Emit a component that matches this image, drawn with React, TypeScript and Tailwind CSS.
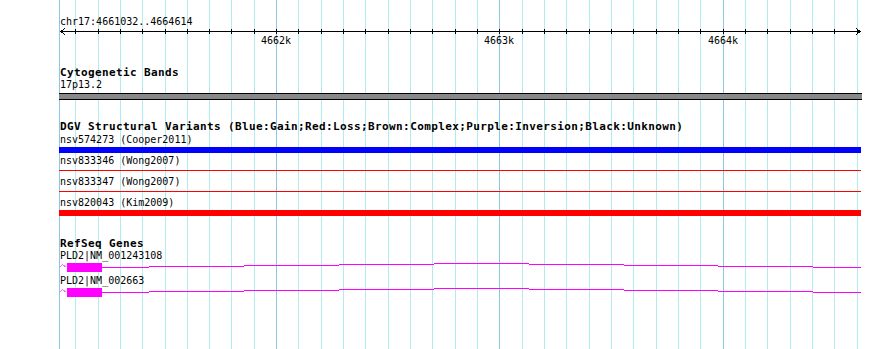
import React from "react";

const START = 4661032;
const px = (pos: number) => Math.round(60 + (pos - START) * 0.2233);
const ticks = Array.from({ length: 36 }, (_, i) => 4661100 + i * 100);
const majors = [4662000, 4663000, 4664000];

const mono = "font-['DejaVu_Sans_Mono','Liberation_Mono',monospace]";
const txt = `${mono} text-[10px] leading-[12px] pl-[1px] whitespace-nowrap text-black`;
const title = `${mono} text-[11px] font-bold leading-[12px] tracking-[0.38px] pl-[1px] whitespace-nowrap text-black`;

const steps: [number, number, number][] = [
  [102, 149, 267],
  [149, 244, 266],
  [244, 339, 265],
  [339, 434, 264],
  [434, 529, 263],
  [529, 624, 264],
  [624, 718, 265],
  [718, 813, 266],
  [813, 861, 267],
];

const variants = [
  { label: "nsv574273 (Cooper2011)", color: "bg-[#0000ff]", thick: true },
  { label: "nsv833346 (Wong2007)", color: "bg-[#ff0000]", thick: false },
  { label: "nsv833347 (Wong2007)", color: "bg-[#ff0000]", thick: false },
  { label: "nsv820043 (Kim2009)", color: "bg-[#ff0000]", thick: true },
];

const genes = ["PLD2|NM_001243108", "PLD2|NM_002663"];

function GeneGlyph() {
  return (
    <svg width={803} height={12} className="block" shapeRendering="crispEdges">
      <path d="M0.5 5.5 L3.5 2.5 L7.5 5.5" stroke="#ff66ff" strokeWidth={1} fill="none" />
      <rect x={8} y={1} width={35} height={9} fill="#ff00ff" />
      {steps.map(([a, b, y]) => (
        <rect key={a} x={a - 59} y={y - 262} width={b - a} height={1} fill="#ff00ff" />
      ))}
    </svg>
  );
}

function Ruler() {
  return (
    <div className="flex flex-col">
      <svg width={803} height={7} className="block" shapeRendering="crispEdges">
        <rect x={1} y={3} width={801} height={1} fill="#000" />
        {ticks.map((t) => (
          <rect key={t} x={px(t) - 59} y={1} width={1} height={5} fill="#000" />
        ))}
        <path d="M6 0.5 L1.5 3.5 L6 6.5" stroke="#000" strokeWidth={1} fill="none" />
        <path d="M797 0.5 L801.5 3.5 L797 6.5" stroke="#000" strokeWidth={1} fill="none" />
      </svg>
      <div className="relative h-[12px]">
        {majors.map((m) => (
          <span
            key={m}
            className={`absolute top-0 ${mono} text-[10px] leading-[12px] text-black`}
            style={{ left: px(m) - 59 - 15 }}
          >
            {m / 1000}k
          </span>
        ))}
      </div>
    </div>
  );
}

export default function App() {
  return (
    <div className="relative w-[890px] h-[349px] bg-white overflow-hidden">
      <svg className="absolute left-0 top-0" width={890} height={349} shapeRendering="crispEdges">
        <rect x={59} y={0} width={1} height={349} fill="#8cc8e4" />
        {ticks.map((t) => (
          <rect key={t} x={px(t)} y={0} width={1} height={349} fill={t % 1000 === 0 ? "#8cc8e4" : "#b2ecee"} />
        ))}
      </svg>

      <div className="relative flex flex-col pl-[59px] w-[862px] pt-[16px]">
        <section className="flex flex-col">
          <div className={txt}>chr17:4661032..4664614</div>
          <Ruler />
        </section>

        <section className="flex flex-col mt-[20px]">
          <div className={title}>Cytogenetic Bands</div>
          <div className={txt}>17p13.2</div>
          <div className="mt-[2px] h-[7px] w-[803px] border-y border-black bg-[#888888]" />
        </section>

        <section className="flex flex-col mt-[21px]">
          <div className={title}>
            DGV Structural Variants (Blue:Gain;Red:Loss;Brown:Complex;Purple:Inversion;Black:Unknown)
          </div>
          <div className="flex flex-col pt-[1px]">
            {variants.map((v) => (
              <div key={v.label} className="flex flex-col h-[21px]">
                <div className={txt}>{v.label}</div>
                {v.thick ? (
                  <div className={`mt-[1px] h-[6px] w-[802px] ${v.color}`} />
                ) : (
                  <div className={`mt-[3px] h-[1px] w-[802px] ${v.color}`} />
                )}
              </div>
            ))}
          </div>
        </section>

        <section className="flex flex-col mt-[20px]">
          <div className={title}>RefSeq Genes</div>
          {genes.map((g) => (
            <div key={g} className="flex flex-col h-[25px]">
              <div className={txt}>{g}</div>
              <GeneGlyph />
            </div>
          ))}
        </section>
      </div>
    </div>
  );
}
